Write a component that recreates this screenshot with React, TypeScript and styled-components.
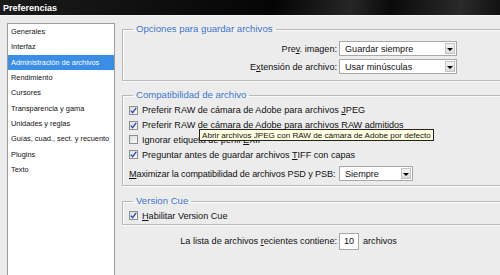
import React from 'react';
import styled, { createGlobalStyle } from 'styled-components';

const GlobalStyle = createGlobalStyle`
    html, body {
        margin: 0;
        padding: 0;
        width: 500px;
        height: 275px;
        overflow: hidden;
        background: #ececec;
        font-family: "Liberation Sans", Arial, sans-serif;
        color: #111;
    }
`;

const Window = styled.div`
    width: 500px;
    height: 275px;
    display: flex;
    flex-direction: column;
    overflow: hidden;
`;

const TitleBar = styled.div`
    height: 15px;
    flex: none;
    display: flex;
    align-items: center;
    padding-left: 3px;
    background: linear-gradient(100deg, #1b1b1b 0%, #050505 55%, #262626 70%, #0a0a0a 78%, #2a2a2a 92%, #111 100%);
    color: #fff;
    font-weight: bold;
    font-size: 9px;
`;

const Body = styled.div`
    flex: 1;
    display: flex;
    gap: 7px;
    padding: 7px 0 0 7px;
    min-height: 0;
    border-top: 1px solid #f6f6f6;
`;

const Sidebar = styled.ul`
    list-style: none;
    margin: 0;
    padding: 0;
    width: 106px;
    flex: none;
    background: #fff;
    border: 1px solid #9c9c9c;
    border-bottom: none;
`;

const SideItem = styled.li<{ $active?: boolean }>`
    height: 15.3px;
    display: flex;
    align-items: center;
    padding-left: 3px;
    font-size: 7.4px;
    white-space: nowrap;
    overflow: hidden;
    background: ${p => (p.$active ? '#3a8ee6' : 'transparent')};
    color: ${p => (p.$active ? '#fff' : '#111')};
`;

const Content = styled.div`
    width: 392px;
    flex: none;
    display: flex;
    flex-direction: column;
`;

const Group = styled.fieldset<{ $gap?: number; $pad?: string }>`
    position: relative;
    margin: ${p => p.$gap ?? 0}px 0 0 0;
    padding: ${p => p.$pad ?? '6px 0 6px 6px'};
    border: 1px solid #b9b9b9;
    box-shadow: inset 1px 1px 0 #fbfbfb, 1px 1px 0 #fbfbfb;
    min-width: 0;
`;

const Legend = styled.legend`
    margin-left: 4px;
    padding: 0 3px;
    font-size: 9.6px;
    line-height: 12px;
    color: #3a74cc;
`;

const Row = styled.div<{ $h?: number; $top?: number; $left?: number }>`
    display: flex;
    align-items: center;
    gap: 2px;
    height: ${p => p.$h ?? 15}px;
    margin-top: ${p => p.$top ?? 0}px;
    padding-left: ${p => p.$left ?? 0}px;
    font-size: 9.1px;
    white-space: nowrap;
`;

const Label = styled.span<{ $align?: 'left' | 'right'; $tight?: boolean }>`
    width: 208px;
    flex: none;
    text-align: ${p => p.$align ?? 'right'};
    letter-spacing: ${p => (p.$tight ? '-0.12px' : 'normal')};
`;

const Stack = styled.div<{ $gap: number }>`
    display: flex;
    flex-direction: column;
    gap: ${p => p.$gap}px;
`;

const Select = styled.div<{ $w: number }>`
    width: ${p => p.$w}px;
    height: 15px;
    box-sizing: border-box;
    display: flex;
    align-items: center;
    background: #fff;
    border: 1px solid #a9a9a9;
    padding-left: 5px;
    font-size: 9.1px;
`;

const SelectText = styled.span`
    flex: 1;
`;

const Arrow = styled.span`
    width: 10px;
    height: 11px;
    margin-right: 1px;
    box-sizing: border-box;
    display: flex;
    align-items: center;
    justify-content: center;
    background: linear-gradient(#f4f4f4, #dcdcdc);
    border: 1px solid #c4c4c4;
    &::after {
        content: '';
        border-left: 3px solid transparent;
        border-right: 3px solid transparent;
        border-top: 3px solid #000;
        margin-top: 1px;
    }
`;

const CheckRow = styled.label`
    display: flex;
    align-items: center;
    gap: 4px;
    height: 14.8px;
    font-size: 9.1px;
    white-space: nowrap;
`;

const Box = styled.span`
    width: 9px;
    height: 9px;
    box-sizing: border-box;
    flex: none;
    display: flex;
    align-items: center;
    justify-content: center;
    border: 1px solid #8e8e8e;
    background: linear-gradient(135deg, #dcdcdc, #fafafa);
`;

const NumberBox = styled.span`
    width: 20px;
    height: 17px;
    box-sizing: border-box;
    display: flex;
    align-items: center;
    padding-left: 4px;
    background: #fff;
    border: 1px solid #a9a9a9;
    font-size: 9.1px;
`;

const After = styled.span`
    margin-left: 2px;
`;

const Tooltip = styled.div`
    position: absolute;
    left: 76px;
    top: 28px;
    height: 12px;
    box-sizing: border-box;
    padding: 0 2px;
    display: flex;
    align-items: center;
    background: #ffffe1;
    border: 1px solid #222;
    font-size: 8.1px;
    white-space: nowrap;
`;

const Check: React.FC<{ checked?: boolean }> = ({ checked }) => (
    <Box>
        {checked && (
            <svg width="7" height="7" viewBox="0 0 7 7">
                <path d="M0.8 3.6 L2.6 5.6 L6.2 0.9" fill="none" stroke="#2450b4" strokeWidth="1.4" />
            </svg>
        )}
    </Box>
);

const menu = [
    'Generales',
    'Interfaz',
    'Administración de archivos',
    'Rendimiento',
    'Cursores',
    'Transparencia y gama',
    'Unidades y reglas',
    'Guías, cuad., sect. y recuento',
    'Plugins',
    'Texto',
];

const App: React.FC = () => {
    return (
        <>
            <GlobalStyle />
            <Window>
                <TitleBar>Preferencias</TitleBar>
                <Body>
                    <Sidebar>
                        {menu.map(m => (
                            <SideItem key={m} $active={m === 'Administración de archivos'}>{m}</SideItem>
                        ))}
                    </Sidebar>
                    <Content>
                        <Group>
                            <Legend>Opciones para guardar archivos</Legend>
                            <Stack $gap={3}>
                                <Row>
                                    <Label>Pre<u>v</u>. imagen:</Label>
                                    <Select $w={118}>
                                        <SelectText>Guardar siempre</SelectText>
                                        <Arrow />
                                    </Select>
                                </Row>
                                <Row>
                                    <Label>E<u>x</u>tensión de archivo:</Label>
                                    <Select $w={118}>
                                        <SelectText>Usar minúsculas</SelectText>
                                        <Arrow />
                                    </Select>
                                </Row>
                            </Stack>
                        </Group>

                        <Group $gap={8} $pad="2px 0 4px 6px">
                            <Legend>Compatibilidad de archivo</Legend>
                            <CheckRow>
                                <Check checked />
                                <span>Preferir RAW de cámara de Adobe para archivos <u>J</u>PEG</span>
                            </CheckRow>
                            <CheckRow>
                                <Check checked />
                                <span>Preferir RAW de cámara de Adobe para archivos RAW a<u>d</u>mitidos</span>
                            </CheckRow>
                            <CheckRow>
                                <Check />
                                <span>Ignorar etiqueta de perfil <u>E</u>XIF</span>
                            </CheckRow>
                            <CheckRow>
                                <Check checked />
                                <span>Preguntar antes de guardar archivos <u>T</u>IFF con capas</span>
                            </CheckRow>
                            <Row $top={4}>
                                <Label $align="left" $tight><u>M</u>aximizar la compatibilidad de archivos PSD y PSB:</Label>
                                <Select $w={74}>
                                    <SelectText>Siempre</SelectText>
                                    <Arrow />
                                </Select>
                            </Row>
                            <Tooltip>Abrir archivos JPEG con RAW de cámara de Adobe por defecto</Tooltip>
                        </Group>

                        <Group $gap={9} $pad="1px 0 1px 6px">
                            <Legend>Version Cue</Legend>
                            <CheckRow>
                                <Check checked />
                                <span><u>H</u>abilitar Version Cue</span>
                            </CheckRow>
                        </Group>

                        <Row $h={17} $top={8} $left={7}>
                            <Label>La lista de archivos <u>r</u>ecientes contiene:</Label>
                            <NumberBox>10</NumberBox>
                            <After>archivos</After>
                        </Row>
                    </Content>
                </Body>
            </Window>
        </>
    );
};

export default App;
